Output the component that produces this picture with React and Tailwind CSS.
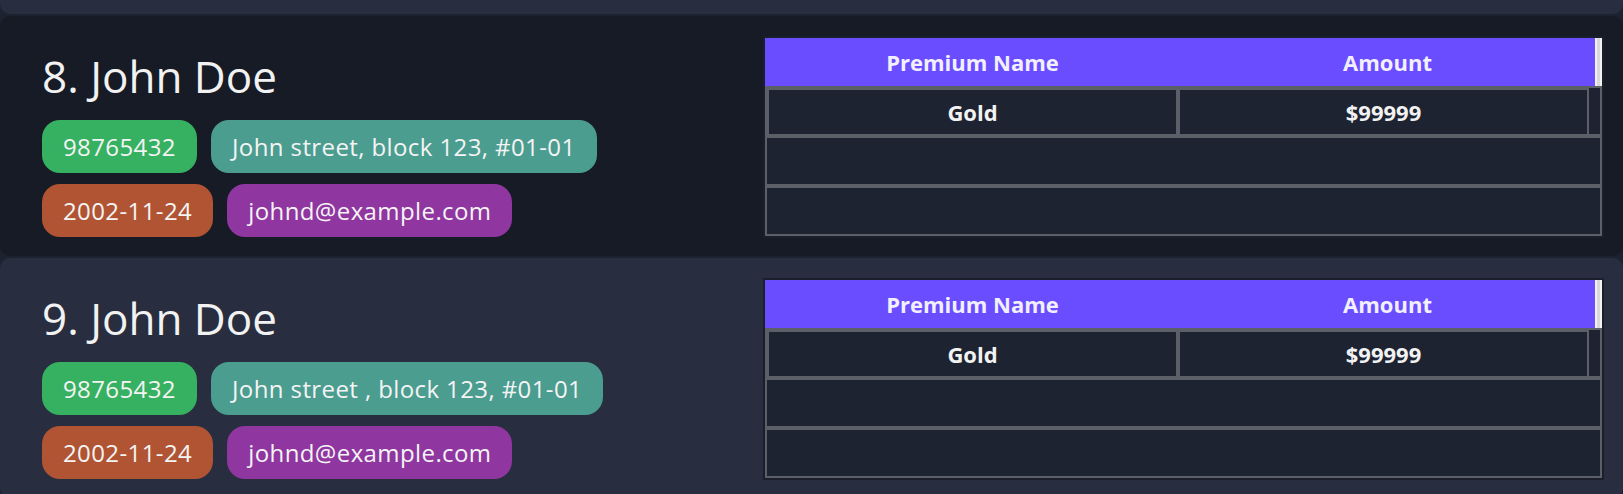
import React from "react";

const people = [
  { idx: 8, phone: "98765432", address: "John street, block 123, #01-01", birthday: "2002-11-24", email: "johnd@example.com", dark: true },
  { idx: 9, phone: "98765432", address: "John street , block 123, #01-01", birthday: "2002-11-24", email: "johnd@example.com", dark: false },
];

const Chip = ({ color, children }) => (
  <div className={`h-[53px] px-[21px] flex items-center rounded-[18px] text-[24px] tracking-[0.4px] text-[#f4f4f4] whitespace-nowrap ${color}`}>
    {children}
  </div>
);

// premium table on the right of each card
const PremiumTable = () => (
  <div className="w-[841px] shrink-0 border-2 border-[#1b1f2b] flex flex-col">
    <div className="flex h-[48px] bg-[#6a4dff] text-[22px] font-bold text-[#f2f0ff]">
      <div className="flex-1 flex items-center justify-center">Premium Name</div>
      <div className="flex-1 flex items-center justify-center">Amount</div>
      <div className="w-[7px] bg-[#d9d9d9] border-x-2 border-[#f2f2f2]" />
    </div>
    <div className="flex h-[50px] border-2 border-[#5b5f67] bg-[#1e2332] text-[22px] font-bold text-[#f2f2f2]">
      <div className="w-[411px] border-2 border-b-0 border-[#5b5f67] flex items-center justify-center">Gold</div>
      <div className="w-[411px] border-2 border-b-0 border-[#5b5f67] flex items-center justify-center">$99999</div>
      <div className="flex-1" />
    </div>
    <div className="h-[50px] border-2 border-[#5b5f67] bg-[#1e2332]" />
    <div className="h-[50px] border-2 border-[#5b5f67] bg-[#1e2332]" />
  </div>
);

const PersonCard = ({ p }) => (
  <div
    className={`h-[240px] shrink-0 flex items-start rounded-[10px] pl-[42px] pr-[19px] pt-[20px] ${
      p.dark ? "bg-[#171b26]" : "bg-[#282e3f]"
    }`}
  >
    <div className="flex-1 flex flex-col mt-[14px]">
      <h1 className="text-[44px] leading-[52px] text-[#f2f2f2] mb-[18px]">
        {p.idx}. John Doe
      </h1>
      <div className="flex flex-col gap-[11px]">
        <div className="flex gap-[14px]">
          <Chip color="bg-[#36b161]">{p.phone}</Chip>
          <Chip color="bg-[#4b9d90]">{p.address}</Chip>
        </div>
        <div className="flex gap-[14px]">
          <Chip color="bg-[#b05433]">{p.birthday}</Chip>
          <Chip color="bg-[#8f36a1]">{p.email}</Chip>
        </div>
      </div>
    </div>
    <PremiumTable />
  </div>
);

export default function App() {
  return (
    <div
      className="w-[1623px] h-[494px] overflow-hidden bg-[#1d2230] flex flex-col gap-[2px]"
      style={{ fontFamily: '"Open Sans", "Noto Sans", sans-serif' }}
    >
      <div className="h-[14px] shrink-0 rounded-b-[10px] bg-[#282e3f]" />
      {people.map((p) => (
        <PersonCard key={p.idx} p={p} />
      ))}
    </div>
  );
}
